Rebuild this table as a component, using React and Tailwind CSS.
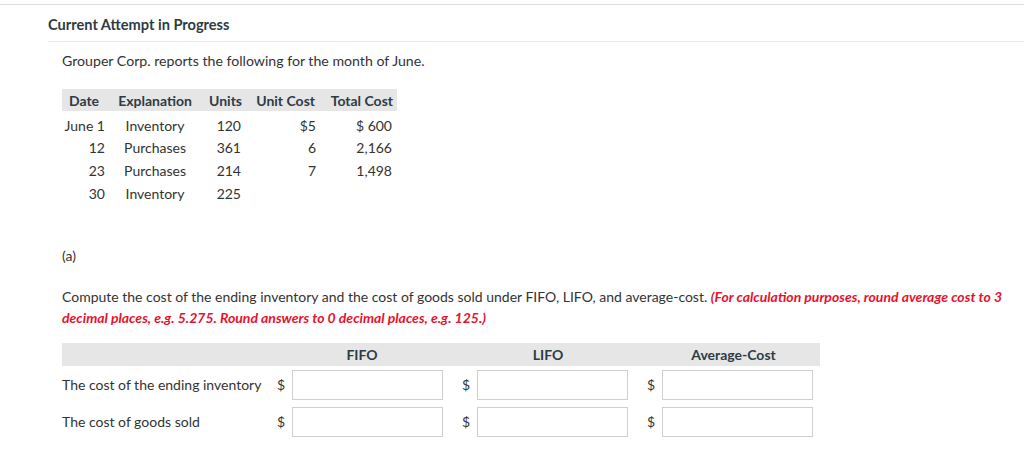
import React from "react";

const rows = [
  { date: "June 1", exp: "Inventory", units: "120", unit: "$5", total: "$ 600" },
  { date: "12", exp: "Purchases", units: "361", unit: "6", total: "2,166" },
  { date: "23", exp: "Purchases", units: "214", unit: "7", total: "1,498" },
  { date: "30", exp: "Inventory", units: "225", unit: "", total: "" },
];

const Money = ({ cls }) => (
  <div className={`flex items-center h-[37px] ${cls}`}>
    <span className="w-[15px] text-[14px]">$</span>
    <input
      type="text"
      className="w-[151px] h-[30px] border border-[#cfcfcf] bg-white outline-none"
    />
  </div>
);

const App = () => {
  return (
    <div
      className="min-h-[469px] bg-white text-[#333] pt-[4px]"
      style={{ fontFamily: "Lato, 'Open Sans', sans-serif" }}
    >
      <div className="border-t border-[#dedede]">
        <div className="ml-[48px] h-[37px] pt-[4px] flex items-center border-b border-[#e6e6e6]">
          <h2 className="text-[14.6px] font-bold text-[#2d3b45]">
            Current Attempt in Progress
          </h2>
        </div>

        <div className="ml-[62px]">
          <p className="text-[14.15px] mt-[10px] leading-[17px]">
            Grouper Corp. reports the following for the month of June.
          </p>

          {/* inventory table */}
          <table className="mt-[20px] text-[14px] border-collapse">
            <thead>
              <tr className="bg-[#e6e6e6] h-[22px] font-bold text-[#2d3b45]">
                <th className="w-[48px] text-center pr-[4px]">Date</th>
                <th className="w-[90px] text-center">Explanation</th>
                <th className="w-[45px] text-right pr-[3px]">Units</th>
                <th className="w-[73px] text-right pr-[3px]">Unit Cost</th>
                <th className="w-[79px] text-right pr-[4px]">Total Cost</th>
              </tr>
            </thead>
            <tbody>
              {rows.map((r, i) => (
                <tr
                  key={i}
                  className={i === 0 ? "h-[25px] align-bottom" : "h-[23px]"}
                >
                  <td className="text-right pr-[5px]">{r.date}</td>
                  <td className="text-center">{r.exp}</td>
                  <td className="text-right pr-[4px]">{r.units}</td>
                  <td className="text-right pr-[2px]">{r.unit}</td>
                  <td className="text-right pr-[5px]">{r.total}</td>
                </tr>
              ))}
            </tbody>
          </table>

          <p className="mt-[42px] text-[14px] leading-[17px]">(a)</p>

          <p className="mt-[22px] text-[14px] leading-[21px] w-[950px]">
            Compute the cost of the ending inventory and the cost of goods sold under FIFO, LIFO, and
            average-cost.{" "}
            <span className="text-[#e8112d] font-bold italic">
              (For calculation purposes, round average cost to 3 decimal places, e.g. 5.275. Round
              answers to 0 decimal places, e.g. 125.)
            </span>
          </p>

          {/* answer grid */}
          <div className="mt-[15px] w-[758px] text-[14px]">
            <div className="grid grid-cols-[213px_174px_198px_173px] bg-[#e6e6e6] h-[23px] items-center font-bold text-[#2d3b45]">
              <div></div>
              <div className="text-center">FIFO</div>
              <div className="text-center">LIFO</div>
              <div className="text-center">Average-Cost</div>
            </div>
            <div className="grid grid-cols-[213px_174px_198px_173px]">
              <div className="flex items-center h-[37px]">The cost of the ending inventory</div>
              <Money cls="pl-[2px]" />
              <Money cls="pl-[13px]" />
              <Money cls="pl-[0px]" />
              <div className="flex items-center h-[37px]">The cost of goods sold</div>
              <Money cls="pl-[2px]" />
              <Money cls="pl-[13px]" />
              <Money cls="pl-[0px]" />
            </div>
          </div>
        </div>
      </div>
    </div>
  );
};

export default App;
